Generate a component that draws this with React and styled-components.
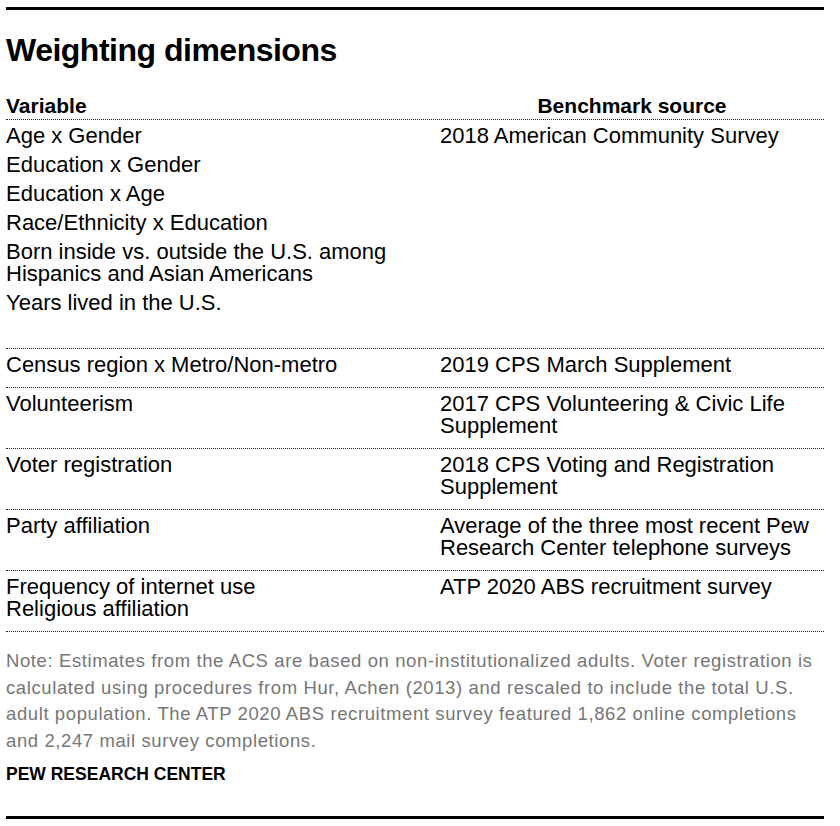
import React from 'react';
import styled, { createGlobalStyle } from 'styled-components';

const GlobalStyle = createGlobalStyle`
  html, body {
    margin: 0;
    padding: 0;
    background: #ffffff;
  }
  body {
    font-family: "Liberation Sans", Arial, sans-serif;
    color: #000000;
  }
`;

const Page = styled.div`
  width: 818px;
  margin-left: 6px;
  padding-top: 7px;
`;

const Rule = styled.div`
  height: 3px;
  background: #000000;
  margin-top: ${props => props.top || 0}px;
`;

const Title = styled.h1`
  margin: 20px 0 0;
  font-size: 32px;
  line-height: 40px;
  font-weight: 700;
  letter-spacing: -0.5px;
`;

const Table = styled.div`
  margin-top: 24px;
`;

const Row = styled.div`
  display: grid;
  grid-template-columns: 434px 1fr;
  border-bottom: 1px dotted #222222;
  padding-top: ${props => props.padTop ?? 5}px;
  padding-bottom: ${props => props.padBottom ?? 11}px;
`;

const HeadCell = styled.div`
  font-size: 21px;
  line-height: 24px;
  font-weight: 700;
  text-align: ${props => (props.center ? 'center' : 'left')};
`;

const Cell = styled.div`
  display: flex;
  flex-direction: column;
  gap: 7px;
  font-size: 22px;
  line-height: 22px;
`;

const Item = styled.div``;

const Note = styled.p`
  margin: 16px 0 0;
  font-size: 18.5px;
  line-height: 26.5px;
  color: #767676;
  letter-spacing: 0.6px;
  white-space: nowrap;
`;

const Source = styled.div`
  margin-top: 9px;
  font-size: 17.5px;
  line-height: 22px;
  font-weight: 700;
`;

const rows = [
  {
    left: [
      'Age x Gender',
      'Education x Gender',
      'Education x Age',
      'Race/Ethnicity x Education',
      ['Born inside vs. outside the U.S. among', 'Hispanics and Asian Americans'],
      'Years lived in the U.S.',
    ],
    right: ['2018 American Community Survey'],
    padBottom: 34,
  },
  {
    left: ['Census region x Metro/Non-metro'],
    right: ['2019 CPS March Supplement'],
  },
  {
    left: ['Volunteerism'],
    right: [['2017 CPS Volunteering & Civic Life', 'Supplement']],
  },
  {
    left: ['Voter registration'],
    right: [['2018 CPS Voting and Registration', 'Supplement']],
  },
  {
    left: ['Party affiliation'],
    right: [['Average of the three most recent Pew', 'Research Center telephone surveys']],
  },
  {
    left: [['Frequency of internet use', 'Religious affiliation']],
    right: ['ATP 2020 ABS recruitment survey'],
  },
];

function renderItem(item, i) {
  if (Array.isArray(item)) {
    return (
      <Item key={i}>
        {item.map((line, j) => (
          <React.Fragment key={j}>
            {j > 0 && <br />}
            {line}
          </React.Fragment>
        ))}
      </Item>
    );
  }
  return <Item key={i}>{item}</Item>;
}

export default function App() {
  return (
    <Page>
      <GlobalStyle />
      <Rule />
      <Title>Weighting dimensions</Title>
      <Table>
        <Row padTop={0} padBottom={1}>
          <HeadCell>Variable</HeadCell>
          <HeadCell center>Benchmark source</HeadCell>
        </Row>
        {rows.map((row, i) => (
          <Row key={i} padBottom={row.padBottom}>
            <Cell>{row.left.map(renderItem)}</Cell>
            <Cell>{row.right.map(renderItem)}</Cell>
          </Row>
        ))}
      </Table>
      <Note>
        Note: Estimates from the ACS are based on non-institutionalized adults. Voter registration is
        <br />
        calculated using procedures from Hur, Achen (2013) and rescaled to include the total U.S.
        <br />
        adult population. The ATP 2020 ABS recruitment survey featured 1,862 online completions
        <br />
        and 2,247 mail survey completions.
      </Note>
      <Source>PEW RESEARCH CENTER</Source>
      <Rule top={31} />
    </Page>
  );
}
